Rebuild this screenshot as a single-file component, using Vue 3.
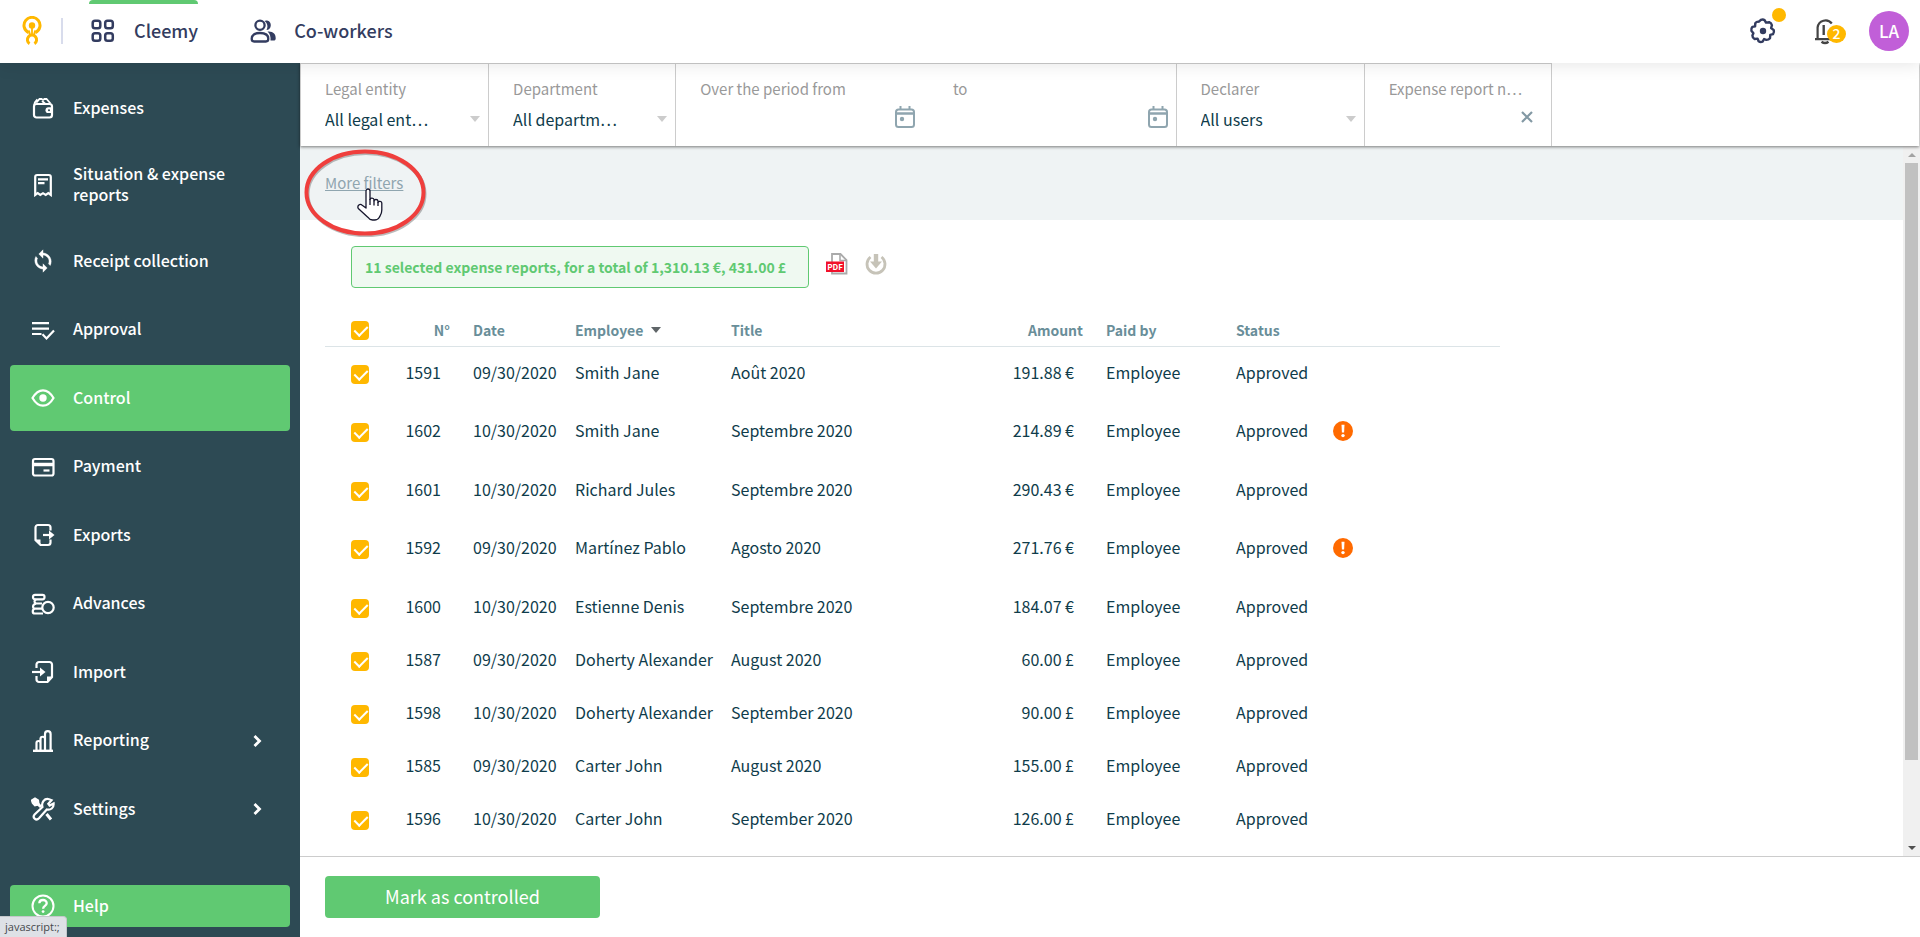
<script setup>
import { ref } from 'vue'

const menu = [
  { id: 'expenses', label: 'Expenses' },
  { id: 'situation', label: 'Situation & expense reports' },
  { id: 'receipt', label: 'Receipt collection' },
  { id: 'approval', label: 'Approval' },
  { id: 'control', label: 'Control', active: true },
  { id: 'payment', label: 'Payment' },
  { id: 'exports', label: 'Exports' },
  { id: 'advances', label: 'Advances' },
  { id: 'import', label: 'Import' },
  { id: 'reporting', label: 'Reporting', more: true },
  { id: 'settings', label: 'Settings', more: true }
]

const rows = ref([
  { n: '1591', date: '09/30/2020', employee: 'Smith Jane', title: 'Août 2020', amount: '191.88 €', tall: true },
  { n: '1602', date: '10/30/2020', employee: 'Smith Jane', title: 'Septembre 2020', amount: '214.89 €', tall: true, alert: true },
  { n: '1601', date: '10/30/2020', employee: 'Richard Jules', title: 'Septembre 2020', amount: '290.43 €', tall: true },
  { n: '1592', date: '09/30/2020', employee: 'Martínez Pablo', title: 'Agosto 2020', amount: '271.76 €', tall: true, alert: true },
  { n: '1600', date: '10/30/2020', employee: 'Estienne Denis', title: 'Septembre 2020', amount: '184.07 €' },
  { n: '1587', date: '09/30/2020', employee: 'Doherty Alexander', title: 'August 2020', amount: '60.00 £' },
  { n: '1598', date: '10/30/2020', employee: 'Doherty Alexander', title: 'September 2020', amount: '90.00 £' },
  { n: '1585', date: '09/30/2020', employee: 'Carter John', title: 'August 2020', amount: '155.00 £' },
  { n: '1596', date: '10/30/2020', employee: 'Carter John', title: 'September 2020', amount: '126.00 £' }
].map(r => ({ ...r, checked: true })))

const allChecked = ref(true)
const from = ref('')
const to = ref('')
const reportNo = ref('')
</script>

<template>
  <div class="app">
    <header class="topbar">
      <a href="#" class="logo" aria-label="Home">
        <svg width="20" height="30" viewBox="0 0 20 30" fill="none" stroke="#ffb800">
          <path d="M6.6 16.6A8 8 0 1 1 13.4 16.6" stroke-width="3" />
          <circle cx="10" cy="9.500" r="3.200" fill="#ffb800" stroke="none" />
          <path d="M10 11v8" stroke-width="1.800" />
          <path d="M6.800 14.500L8 19M13.200 14.500L12 19" stroke-width="2" />
          <path d="M7.600 27.600A4.600 4.600 0 1 1 12.400 27.600" stroke-width="3" />
        </svg>
      </a>
      <span class="divider"></span>
      <nav class="apps">
        <a href="#" class="app-link current">
          <svg width="26" height="26" viewBox="0 0 26 26" fill="none" stroke="#333c60" stroke-width="2.500">
            <rect x="2.700" y="2.700" width="7.600" height="7.600" rx="2.300" />
            <rect x="15.200" y="2.700" width="7.600" height="7.600" rx="2.300" />
            <rect x="2.700" y="15.200" width="7.600" height="7.600" rx="2.300" />
            <rect x="15.200" y="15.200" width="7.600" height="7.600" rx="2.300" />
          </svg>
          <span>Cleemy</span>
        </a>
        <a href="#" class="app-link">
          <svg width="26" height="26" viewBox="0 0 26 26" fill="none" stroke="#333c60" stroke-width="2.300">
            <path d="M14.500 3c1.500-1.200 6.300-.5 6.300 4.200 0 3-2 4.600-4.300 4.800 1.600-2.800 1.400-6.500-2-9z" fill="#333c60" stroke="none" />
            <path d="M17.500 13.500c5.500-.6 8.500 2.600 8.200 7.200-.1 1.300-1 1.900-2.200 1.900h-3c.4-3.600-.5-6.900-3-9.100z" fill="#333c60" stroke="none" />
            <circle cx="10" cy="7.200" r="4.600" />
            <path d="M1.700 20.800c0-3.800 3-5.800 8.300-5.800s8.300 2 8.300 5.800c0 1.900-.6 2.700-2.400 2.700H4.100c-1.800 0-2.400-.8-2.400-2.700z" />
          </svg>
          <span>Co-workers</span>
        </a>
      </nav>
      <div class="tools">
        <button class="tool" aria-label="Settings">
          <svg width="28" height="28" viewBox="0 0 28 28" fill="none" stroke="#333c60" stroke-width="2.400" stroke-linejoin="round">
            <path d="M11.9 2.900Q14 1.900 15.700 3.300L17 5.600L20.200 5.200Q22.400 6 22.900 8.300L22.100 11L24.800 13.100Q25.400 15.300 24 17.200L21.300 17.900L21 21.200Q19.400 23.100 17.200 22.900L15.100 22L13.600 24.600Q11.500 25.500 9.600 24.200L8.600 21.600L5.500 22Q3.400 20.900 3.400 18.600L4.400 16.300L2.400 13.800Q1.900 11.500 3.400 9.900L6.100 9.300L6.300 6.200Q7.700 4.300 9.900 4.700L11.900 2.900Z" />
            <circle cx="14" cy="14" r="3.200" fill="#333c60" stroke="none" />
          </svg>
          <span class="dot"></span>
        </button>
        <button class="tool bell" aria-label="Notifications">
          <svg width="28" height="28" viewBox="0 0 28 28" fill="none" stroke="#444" stroke-width="2.200">
            <path d="M18.800 6.500A8 8 0 0 0 4.600 10.500V22M2 22.200h15" />
            <path d="M10.700 8v10" stroke-width="2.400" />
            <path d="M8.500 24.800q3.500 2.600 7 0" stroke-width="2.400" />
          </svg>
          <span class="badge">2</span>
        </button>
        <button class="avatar">LA</button>
      </div>
    </header>

    <aside class="sidebar">
      <nav class="menu">
        <a v-for="m in menu" :key="m.id" href="#" class="item" :class="{ active: m.active }">
          <svg class="icon" viewBox="0 0 24 24" fill="none" stroke="#fff" stroke-width="2.200">
            <template v-if="m.id === 'expenses'">
              <rect x="3" y="8" width="18" height="13.500" rx="2.500" />
              <path d="M3 9.500C3 6 5 5 6.500 3.500M5.500 6.500l3-3.500h2l1.500 1 1.500-1h2l4 4.500M11 5l3 2.500" stroke-width="1.800" />
              <path d="M21 11.300h-3.600a2.900 2.900 0 0 0 0 5.800H21z" fill="#fff" stroke="none" />
              <circle cx="18" cy="14.200" r="1" fill="#2d4a54" stroke="none" />
            </template>
            <template v-else-if="m.id === 'situation'">
              <path d="M4.200 22V4a2 2 0 0 1 2-2h11.600a2 2 0 0 1 2 2v18l-2.500-1.800-2.600 1.800-2.700-1.800-2.700 1.800-2.600-1.800z" />
              <path d="M7 6.300h10M7 10.200h6.500" />
            </template>
            <path
              v-else-if="m.id === 'receipt'"
              d="M12 3.900V.8L7.800 5 12 9.200V6.100a6.200 6.200 0 0 1 5.500 8.700l1.700 1.700A8.600 8.600 0 0 0 12 3.900zM12 17.900a6.200 6.200 0 0 1-5.500-8.700L4.800 7.500A8.600 8.600 0 0 0 12 20.100v3.100l4.200-4.200L12 14.800z"
              fill="#fff"
              stroke-width=".4"
            />
            <template v-else-if="m.id === 'approval'">
              <path d="M1 5.200h17M1 10.600h17M1 16h9.500M11.500 16.300l4 4.200 7.500-8" />
            </template>
            <template v-else-if="m.id === 'control'">
              <path d="M1.500 12C4.500 6.800 8 4.300 12 4.300S19.500 6.800 22.500 12C19.500 17.200 16 19.700 12 19.700S4.500 17.200 1.500 12z" />
              <circle cx="12" cy="12" r="3.700" fill="#fff" stroke="none" />
            </template>
            <template v-else-if="m.id === 'payment'">
              <rect x="2" y="4" width="20.500" height="16.500" rx="2" />
              <path d="M2 9.500h20" stroke-width="3.500" />
              <path d="M12.500 15.500h6" />
            </template>
            <template v-else-if="m.id === 'exports'">
              <path d="M19.500 7.500V4.500a2.500 2.500 0 0 0-2.500-2.500H7A2.500 2.500 0 0 0 4.500 4.500v12.500L9.500 22H17a2.500 2.500 0 0 0 2.500-2.500v-3" />
              <path d="M4.500 16.500h5V22z" fill="#fff" stroke="none" />
              <path d="M12 12h9" />
              <path d="M18 7.500v9l5.500-4.500z" fill="#fff" stroke="none" />
            </template>
            <template v-else-if="m.id === 'advances'">
              <circle cx="17" cy="15.500" r="5.700" />
              <rect x="2" y="2.800" width="11.500" height="4.500" rx="2" />
              <path d="M5 7.500c-2 1-2 3 0 4h5.500M5 11.500h6M5 11.700c-3.500.6-4 4.500-1 5h7M4 16.500c-3 1-3 5 0 5h8" />
            </template>
            <template v-else-if="m.id === 'import'">
              <path d="M5.500 8V4.500A2.500 2.500 0 0 1 8 2h10.500A2.500 2.500 0 0 1 21 4.500v12.500L16.500 22H8a2.500 2.500 0 0 1-2.500-2.500V16" />
              <path d="M21 16.500h-5V22z" fill="#fff" stroke="none" />
              <path d="M1 12h10.500" />
              <path d="M9 7.500v9l5.500-4.500z" fill="#fff" stroke="none" />
            </template>
            <template v-else-if="m.id === 'reporting'">
              <path d="M2 21.800h20" stroke-width="2.400" />
              <path d="M5.500 21v-7a2 2 0 0 1 4 0M9.500 21V10a2.200 2.200 0 0 1 4.500 0M14 21V5a2.800 2.800 0 0 1 5.600 0V21" />
            </template>
            <template v-else>
              <path d="M1 3.500L4 1.500l3 2 .5 4-3.500.8L1.800 6z" fill="#fff" />
              <path d="M7 7l3 3M15.500 17l4.500 5.500" stroke-width="3" />
              <path d="M20.500 3.200l-3.200 3.600 1.300 1.700 4-2c.4 4.500-3 6.800-6.800 6L8 21.300c-3 3-7-.8-4.400-3.800L11.500 10C10 5.500 13.500 1 18 2.200z" />
            </template>
          </svg>
          <span class="text">{{ m.label }}</span>
          <svg v-if="m.more" class="chevron" viewBox="0 0 10 14" fill="none" stroke="#fff" stroke-width="2.800">
            <path d="M1.500 2l5 5-5 5" />
          </svg>
        </a>
      </nav>
      <a href="#" class="help">
        <svg class="icon" viewBox="0 0 24 24" fill="none" stroke="#fff" stroke-width="2">
          <circle cx="12" cy="12" r="10.500" />
          <path d="M8.300 9.300c.2-4.500 7.500-4.300 7.400 0 0 2.600-3.600 2.700-3.600 5.400" stroke-width="2.300" />
          <circle cx="12.100" cy="17.600" r="1.400" fill="#fff" stroke="none" />
        </svg>
        <span class="text">Help</span>
      </a>
    </aside>

    <main class="main">
      <form class="filters" @submit.prevent>
        <div class="cell">
          <label for="entity">Legal entity</label>
          <div class="pick">
            <select id="entity"><option>All legal ent…</option></select>
            <span class="caret"></span>
          </div>
        </div>
        <div class="cell">
          <label for="dept">Department</label>
          <div class="pick">
            <select id="dept"><option>All departm…</option></select>
            <span class="caret"></span>
          </div>
        </div>
        <div class="cell period">
          <div class="date">
            <label for="from">Over the period from</label>
            <div class="pick">
              <input id="from" v-model="from" type="text" />
              <button type="button" class="glyph" aria-label="Pick start date">
                <svg width="20" height="22" viewBox="0 0 20 22" fill="none" stroke="#8fa5af" stroke-width="2">
                  <rect x="1" y="3.500" width="18" height="17.500" rx="2.500" />
                  <path d="M1 7.500h18" stroke-width="2.500" />
                  <path d="M5.500 0v4M14.500 0v4" />
                  <circle cx="7" cy="13" r="2.200" fill="#8fa5af" stroke="none" />
                </svg>
              </button>
            </div>
          </div>
          <div class="date">
            <label for="to">to</label>
            <div class="pick">
              <input id="to" v-model="to" type="text" />
              <button type="button" class="glyph" aria-label="Pick end date">
                <svg width="20" height="22" viewBox="0 0 20 22" fill="none" stroke="#8fa5af" stroke-width="2">
                  <rect x="1" y="3.500" width="18" height="17.500" rx="2.500" />
                  <path d="M1 7.500h18" stroke-width="2.500" />
                  <path d="M5.500 0v4M14.500 0v4" />
                  <circle cx="7" cy="13" r="2.200" fill="#8fa5af" stroke="none" />
                </svg>
              </button>
            </div>
          </div>
        </div>
        <div class="cell">
          <label for="declarer">Declarer</label>
          <div class="pick">
            <select id="declarer"><option>All users</option></select>
            <span class="caret"></span>
          </div>
        </div>
        <div class="cell">
          <label for="report">Expense report n…</label>
          <div class="pick clearable">
            <input id="report" v-model="reportNo" type="text" />
            <button type="button" class="glyph" aria-label="Clear" @click="reportNo = ''">
              <svg width="12" height="12" viewBox="0 0 12 12" stroke="#8399a4" stroke-width="2.200">
                <path d="M1 1l10 10M11 1L1 11" />
              </svg>
            </button>
          </div>
        </div>
        <div class="rest"></div>
      </form>

      <div class="body">
        <div class="scroll">
          <div class="band">
            <a href="#" class="more">More filters</a>
            <svg class="ring" width="126" height="92" viewBox="0 0 126 92" fill="none">
              <ellipse cx="64" cy="47" rx="58.500" ry="41" stroke="#777" stroke-opacity=".5" stroke-width="4" />
              <ellipse cx="63" cy="45.500" rx="58.500" ry="41" stroke="#ef3e3c" stroke-width="4" />
            </svg>
            <svg class="hand" width="26" height="34" viewBox="0 0 26 34" fill="#fff" stroke="#15152c" stroke-width="1.300" stroke-linejoin="round">
              <path d="M9 20V3a2 2 0 0 1 4 0v8.500c0-2 4-2 4 .3v1c.3-1.800 3.800-1.800 4 .3v1.200c.4-1.500 3.800-1.300 3.800.8V22c0 4-1.200 5-2.600 7.500-1 1.700-2.400 2.500-4.700 2.500h-2c-2.500 0-3.500-1-4.700-2.800L1.300 20.500C-.2 17.600 3 15.300 5.200 17.200z" />
              <path d="M13 11v6M17 12.500v5M21 14v4" />
            </svg>
          </div>

          <section class="content">
            <div class="summary">
              <p class="banner">11 selected expense reports, for a total of 1,310.13 €, 431.00 £</p>
              <button class="doc" aria-label="Export as PDF">
                <svg width="22" height="22" viewBox="0 0 22 22">
                  <path d="M6 1h8.500L20.500 7v13.500H6z" fill="#fff" stroke="#aaa" stroke-width="1.800" />
                  <path d="M14 1v6.500h6.500" fill="none" stroke="#aaa" stroke-width="1.600" />
                  <rect x="0" y="8.500" width="18" height="10.500" fill="#f2112b" />
                  <text x="9" y="16.800" text-anchor="middle" class="pdf">PDF</text>
                </svg>
              </button>
              <button class="doc" aria-label="Download">
                <svg width="22" height="22" viewBox="0 0 22 22" fill="none" stroke="#c6c3b8">
                  <path d="M5.500 4A9 9 0 1 0 16.500 4" stroke-width="2.800" />
                  <path d="M11 1v9" stroke-width="4.400" />
                  <path d="M5 8.500h12L11 15.500z" fill="#c6c3b8" stroke="none" />
                </svg>
              </button>
            </div>

            <table>
              <colgroup>
                <col class="c-check" /><col class="c-num" /><col class="c-date" /><col class="c-emp" />
                <col /><col class="c-amount" /><col class="c-paid" /><col class="c-status" /><col class="c-alert" />
              </colgroup>
              <thead>
                <tr>
                  <th class="check"><input v-model="allChecked" type="checkbox" aria-label="Select all" /></th>
                  <th class="right">N°</th>
                  <th>Date</th>
                  <th>Employee<span class="sort"></span></th>
                  <th>Title</th>
                  <th class="right">Amount</th>
                  <th>Paid by</th>
                  <th>Status</th>
                  <th></th>
                </tr>
              </thead>
              <tbody>
                <tr v-for="r in rows" :key="r.n" :class="{ tall: r.tall }">
                  <td class="check"><input v-model="r.checked" type="checkbox" :aria-label="'Select ' + r.n" /></td>
                  <td class="right">{{ r.n }}</td>
                  <td>{{ r.date }}</td>
                  <td>{{ r.employee }}</td>
                  <td>{{ r.title }}</td>
                  <td class="right">{{ r.amount }}</td>
                  <td>Employee</td>
                  <td>Approved</td>
                  <td>
                    <svg v-if="r.alert" class="warn" width="20" height="20" viewBox="0 0 20 20">
                      <circle cx="10" cy="10" r="10" fill="#ff6a00" />
                      <path d="M8.500 3.800h3l-.4 7.700H8.900z" fill="#fff" />
                      <circle cx="10" cy="14.600" r="1.700" fill="#fff" />
                    </svg>
                  </td>
                </tr>
              </tbody>
            </table>
          </section>
        </div>
        <div class="track">
          <span class="arrow up"></span>
          <span class="rail"><span class="thumb"></span></span>
          <span class="arrow down"></span>
        </div>
      </div>

      <footer class="actions">
        <button class="primary">Mark as controlled</button>
      </footer>
    </main>

    <div class="status">javascript:;</div>
  </div>
</template>

<style>
body {
  margin: 0;
}
</style>

<style scoped>
* {
  box-sizing: border-box;
}

.app {
  position: relative;
  display: grid;
  grid-template: 63px minmax(0, 1fr) / 300px minmax(0, 1fr);
  height: 100vh;
  overflow: hidden;
  background: #fff;
  color: #0f3c4b;
  font: 16px/24px "Noto Sans CJK KR", "Noto Sans", sans-serif;
}

a {
  color: inherit;
  text-decoration: none;
}

button,
input,
select {
  margin: 0;
  padding: 0;
  border: 0;
  background: none;
  color: inherit;
  font: inherit;
}

svg {
  display: block;
  flex: none;
}

.topbar {
  position: relative;
  z-index: 2;
  grid-column: 1 / 3;
  display: flex;
  align-items: center;
  padding: 0 11px 1px 22px;
  background: #fff;
  box-shadow: 0 2px 16px rgba(0, 0, 0, 0.1);
}

.divider {
  width: 2px;
  height: 26px;
  margin: 0 26px 0 19px;
  background: #d8dcec;
}

.apps {
  display: flex;
  align-self: stretch;
  gap: 51px;
}

.app-link {
  display: flex;
  align-items: center;
  gap: 18px;
  padding-left: 1px;
  border-radius: 4px;
  color: #333c60;
  font-size: 18px;
  font-weight: 500;
}

.app-link span {
  padding-bottom: 2px;
}

.current {
  background: linear-gradient(#60c972, #60c972) top / 100% 4px no-repeat;
}

.tools {
  display: flex;
  align-items: center;
  margin-left: auto;
}

.tool {
  position: relative;
  width: 28px;
  height: 28px;
}

.bell {
  margin: 0 28px 0 36px;
}

.dot {
  position: absolute;
  top: -9px;
  right: -9px;
  width: 14px;
  height: 14px;
  border-radius: 50%;
  background: #ffb800;
}

.badge {
  position: absolute;
  top: 8px;
  left: 14px;
  width: 19px;
  height: 18px;
  border-radius: 50%;
  background: #ffb800;
  color: #fff;
  font-size: 14px;
  font-weight: 500;
  line-height: 17px;
}

.avatar {
  width: 40px;
  height: 40px;
  border-radius: 50%;
  background: #c15fd8;
  color: #fff;
  font-size: 17px;
  font-weight: 500;
}

.sidebar {
  display: flex;
  flex-direction: column;
  padding: 12px 10px 10px;
  background: #2d4a54;
  color: #fff;
  font-weight: 500;
  line-height: 21px;
}

.menu {
  display: flex;
  flex: 1;
  flex-direction: column;
  justify-content: space-between;
  margin-bottom: 43px;
}

.item,
.help {
  display: flex;
  align-items: center;
  gap: 18px;
  padding: 19px 27px 19px 21px;
  border-radius: 4px;
}

.item {
  min-height: 66px;
}

.help {
  height: 42px;
}

.active,
.help {
  background: #60c972;
}

.icon {
  width: 24px;
  height: 24px;
}

.text {
  flex: 1;
  padding-bottom: 2px;
}

.chevron {
  width: 10px;
  height: 14px;
}

.main {
  display: flex;
  flex-direction: column;
  min-height: 0;
}

.filters {
  position: relative;
  z-index: 1;
  display: grid;
  flex: none;
  grid-template-columns: 188fr 187fr 500fr 188fr 187fr 368fr;
  height: 83px;
  margin-right: 1px;
  background: #fff;
  box-shadow: 0 1px 3px rgba(0, 0, 0, 0.5);
}

.cell {
  min-width: 0;
  padding: 13px 8px 0 24px;
  border: solid #ccc;
  border-width: 1px 0 0 1px;
}

.rest {
  border-left: 1px solid #ccc;
}

.period {
  display: grid;
  grid-template-columns: 1fr 1fr;
  gap: 38px;
}

.cell label {
  display: block;
  overflow: hidden;
  color: #999;
  font-size: 15px;
  white-space: nowrap;
}

.pick {
  display: flex;
  align-items: center;
  height: 36px;
}

.pick select,
.pick input {
  flex: 1;
  min-width: 0;
  height: 24px;
  outline: 0;
  appearance: none;
}

.glyph {
  padding-bottom: 4px;
}

.caret {
  border: solid transparent;
  border-width: 6px 5px 0;
  border-top-color: #ccc;
}

.clearable {
  padding-right: 10px;
}

.body {
  display: flex;
  flex: 1;
  min-height: 0;
}

.scroll {
  flex: 1;
  min-width: 0;
  overflow-y: auto;
  scrollbar-width: none;
}

.band {
  position: relative;
  height: 74px;
  padding: 24px 25px;
  background: #eff3f4;
}

.more {
  color: #8fa5af;
  font-size: 15px;
  text-decoration: underline;
}

.ring {
  position: absolute;
  z-index: 1;
  top: 1px;
  left: 2px;
}

.hand {
  position: absolute;
  z-index: 1;
  top: 42px;
  left: 57px;
}

.content {
  padding: 26px 25px 0;
}

.summary {
  display: flex;
  align-items: flex-start;
  gap: 17px;
  margin-left: 26px;
}

.banner {
  height: 42px;
  margin: 0;
  padding: 0 22px 0 13px;
  border: 1px solid #60c972;
  border-radius: 4px;
  background: #eff9f1;
  color: #60c972;
  font-size: 14px;
  font-weight: 700;
  line-height: 40px;
  white-space: nowrap;
}

.doc {
  margin-top: 7px;
}

.pdf {
  fill: #fff;
  font-size: 8px;
  font-weight: 700;
}

table {
  width: 100%;
  max-width: 1175px;
  margin-top: 26px;
  border-collapse: separate;
  border-spacing: 0;
  table-layout: fixed;
}

.c-check { width: 70px; }
.c-num { width: 68px; }
.c-date { width: 102px; }
.c-emp { width: 156px; }
.c-amount { width: 120px; }
.c-paid { width: 130px; }
.c-status { width: 97px; }
.c-alert { width: 177px; }

th {
  height: 33px;
  padding: 0 10px;
  border-bottom: 1px solid #dce4e7;
  color: #698e99;
  font-size: 14px;
  font-weight: 700;
  text-align: left;
  vertical-align: middle;
}

th.right {
  padding-right: 13px;
  text-align: right;
}

td {
  height: 53px;
  padding: 13px 10px 0;
  vertical-align: top;
  white-space: nowrap;
}

.tall td {
  height: 58px;
}

.tall:nth-child(even) td {
  height: 59px;
}

td.right {
  padding-right: 22px;
  text-align: right;
}

th.check,
td.check {
  padding-left: 26px;
}

td.check {
  padding-top: 18px;
}

.check input {
  display: block;
  width: 18px;
  height: 19px;
  border-radius: 4px;
  background: #ffb800;
  appearance: none;
}

.check input:checked::before {
  content: "";
  display: block;
  width: 6px;
  height: 11px;
  margin: 2px 0 0 6px;
  border: solid #fff;
  border-width: 0 2px 2px 0;
  transform: rotate(45deg);
}

.sort {
  display: inline-block;
  margin-left: 8px;
  border: solid transparent;
  border-width: 6px 5px 0;
  border-top-color: #5f6568;
  vertical-align: 3px;
}

.warn {
  margin-top: 3px;
}

.track {
  display: flex;
  flex-direction: column;
  width: 17px;
  padding-top: 2px;
  background: #f0f0f0;
}

.rail {
  flex: 1;
  padding: 0 2px;
}

.thumb {
  display: block;
  height: 88%;
  background: #c1c1c1;
}

.arrow {
  flex: none;
  height: 15px;
}

.arrow::before {
  content: "";
  display: block;
  width: 0;
  margin: 5px auto;
  border: 4px solid transparent;
}

.up::before {
  border-top: 0;
  border-bottom-color: #a3a3a3;
}

.down::before {
  border-bottom: 0;
  border-top-color: #505050;
}

.actions {
  flex: none;
  height: 81px;
  padding: 19px 25px;
  border-top: 1px solid #ccc;
}

.primary {
  width: 275px;
  height: 42px;
  padding-bottom: 2px;
  border-radius: 4px;
  background: #60c972;
  color: #fff;
  font-size: 18px;
}

.status {
  position: absolute;
  z-index: 3;
  bottom: 0;
  left: 0;
  padding: 0 6px 0 5px;
  border: solid #c4c7cb;
  border-width: 1px 1px 0 0;
  border-radius: 0 4px 0 0;
  background: #dee1e6;
  color: #45484c;
  font: 11px/20px "Open Sans", sans-serif;
}
</style>
